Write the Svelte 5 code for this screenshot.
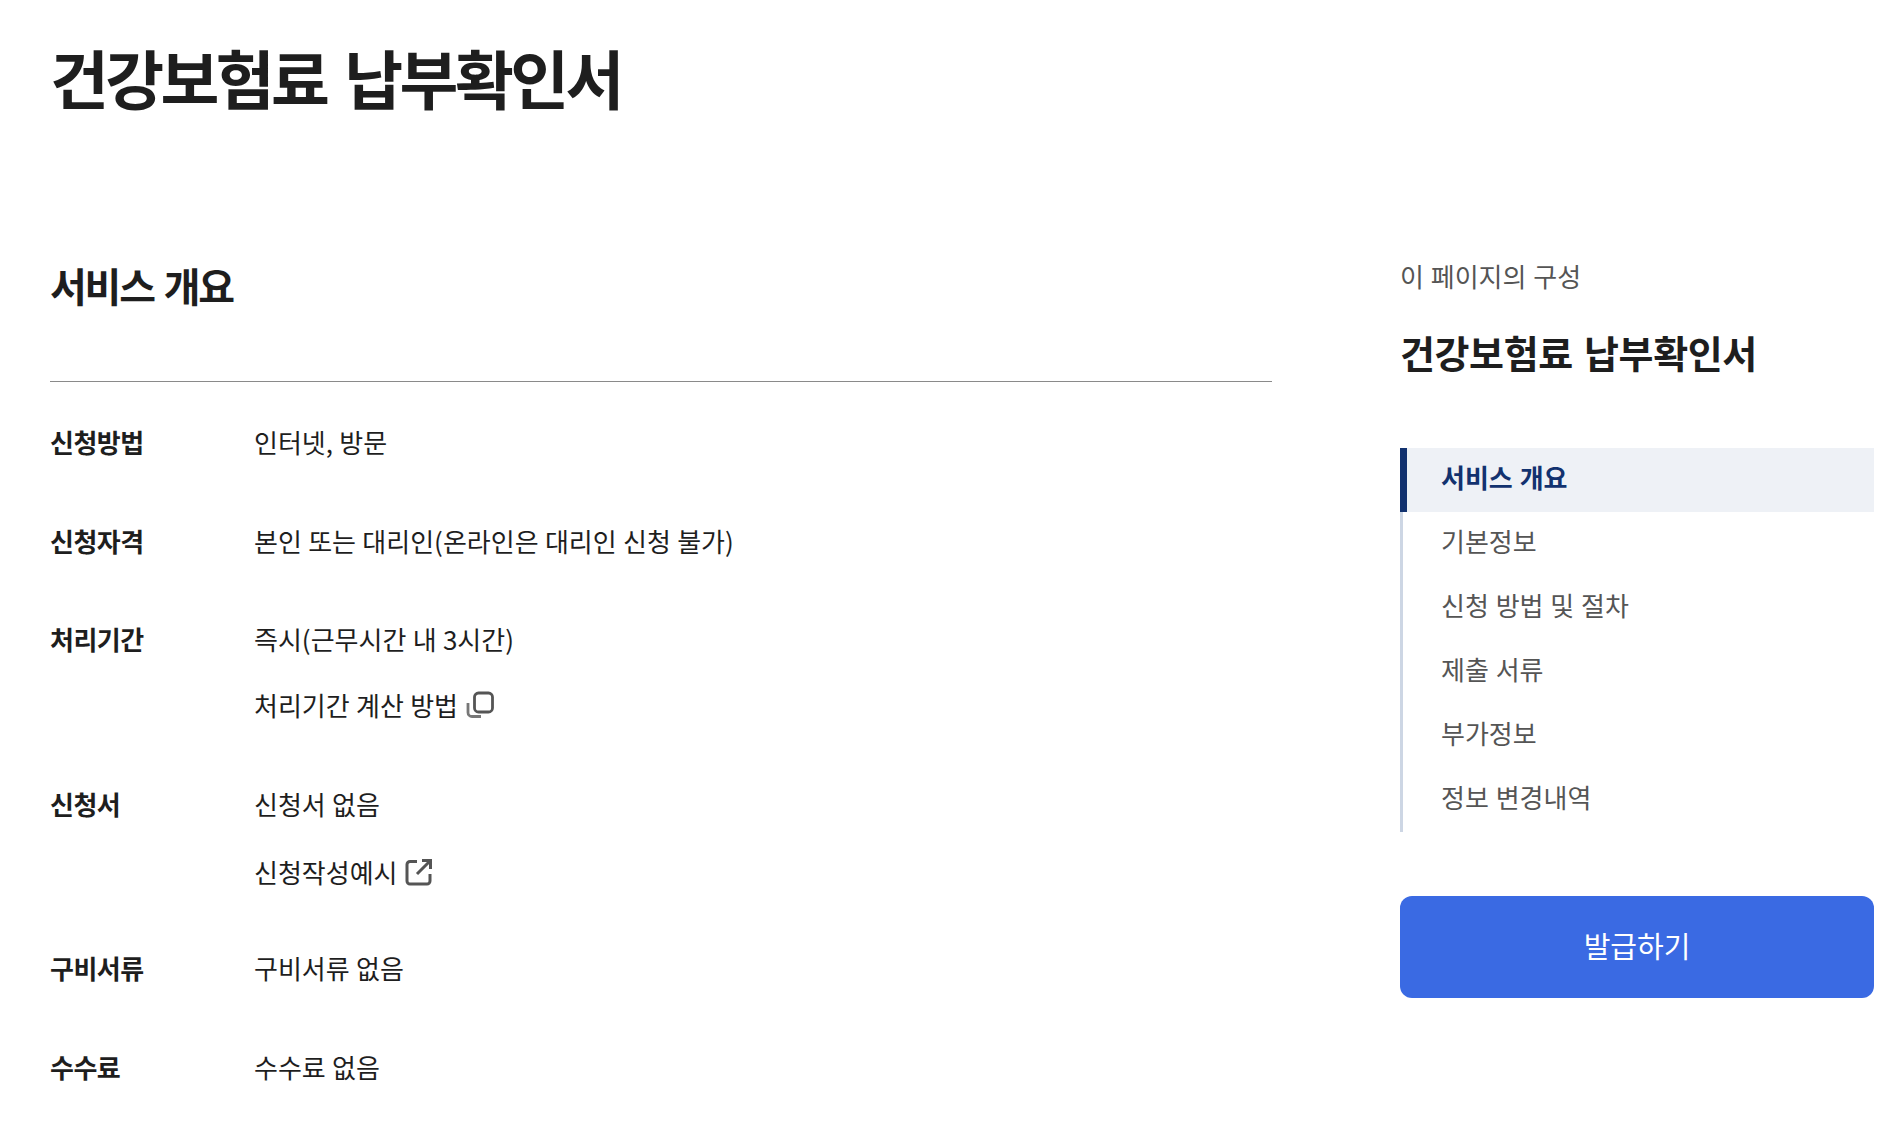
<script>
  const rows = [
    { label: "신청방법", lines: [{ text: "인터넷, 방문" }] },
    { label: "신청자격", lines: [{ text: "본인 또는 대리인(온라인은 대리인 신청 불가)" }] },
    { label: "처리기간", lines: [{ text: "즉시(근무시간 내 3시간)" }, { text: "처리기간 계산 방법", icon: "copy" }] },
    { label: "신청서", lines: [{ text: "신청서 없음" }, { text: "신청작성예시", icon: "link" }] },
    { label: "구비서류", lines: [{ text: "구비서류 없음" }] },
    { label: "수수료", lines: [{ text: "수수료 없음" }] },
  ];
  const nav = ["서비스 개요", "기본정보", "신청 방법 및 절차", "제출 서류", "부가정보", "정보 변경내역"];
</script>

<div class="page">
  <h1>건강보험료 납부확인서</h1>
  <div class="columns">
    <main>
      <h2>서비스 개요</h2>
      <dl>
        {#each rows as row}
          <div class="row">
            <dt>{row.label}</dt>
            <dd>
              {#each row.lines as line}
                <p class:link={line.icon === "link"}>
                  {line.text}
                  {#if line.icon === "copy"}
                    <svg width="28" height="28" viewBox="0 0 28 28" fill="none" stroke="#555" stroke-width="2.800">
                      <rect x="8.500" y="2" width="18" height="19" rx="4" />
                      <path d="M2 12v9.500a4 4 0 0 0 4 4h9" stroke="#777" />
                    </svg>
                  {:else if line.icon === "link"}
                    <svg width="28" height="28" viewBox="0 0 28 28" fill="none" stroke="#555" stroke-width="3">
                      <path d="M12 3.500H5a3 3 0 0 0-3 3V23a3 3 0 0 0 3 3h17a3 3 0 0 0 3-3v-7" />
                      <path d="M12 16 25.500 2.500M17 2.500h8.500V11" />
                    </svg>
                  {/if}
                </p>
              {/each}
            </dd>
          </div>
        {/each}
      </dl>
    </main>
    <aside>
      <div class="eyebrow">이 페이지의 구성</div>
      <div class="aside-title">건강보험료 납부확인서</div>
      <ul>
        {#each nav as item, i}
          <li class:active={i === 0}>{item}</li>
        {/each}
      </ul>
      <button type="button">발급하기</button>
    </aside>
  </div>
</div>

<style>
  :global(body) {
    background: #fff;
    font-family: "Noto Sans CJK KR", "Noto Sans", sans-serif;
    color: #1e1e1e;
  }
  .page {
    padding: 36px 24px 0 50px;
    height: 1092px;
    overflow: hidden;
  }
  h1 {
    margin: 0;
    font-size: 64px;
    line-height: 80px;
    font-weight: 700;
    letter-spacing: -3.6px;
    word-spacing: 7px;
  }
  .columns {
    display: flex;
    justify-content: space-between;
    margin-top: 139px;
  }
  main {
    width: 1222px;
  }
  h2 {
    margin: 0;
    font-size: 40px;
    line-height: 60px;
    font-weight: 700;
    letter-spacing: -2.2px;
    word-spacing: 3px;
    padding-bottom: 66px;
    border-bottom: 1px solid #8a8a8a;
  }
  dl {
    margin: 0;
    padding-top: 42px;
  }
  .row {
    display: flex;
    margin-bottom: 62.5px;
  }
  dt {
    width: 204px;
    flex: none;
    font-size: 26px;
    line-height: 36px;
    font-weight: 700;
    letter-spacing: -0.5px;
  }
  dd {
    margin: 0;
  }
  p {
    margin: 0 0 30px;
    font-size: 26px;
    line-height: 36px;
    word-spacing: 0.5px;
    display: flex;
    align-items: center;
    gap: 8px;
  }
  p:last-child {
    margin-bottom: 0;
  }
  p.link {
    padding-top: 2px;
    margin-bottom: -2px;
    gap: 7px;
  }
  aside {
    width: 474px;
    padding-top: 1px;
  }
  .eyebrow {
    font-size: 26px;
    line-height: 40px;
    word-spacing: 1px;
    color: #555;
  }
  .aside-title {
    margin-top: 26px;
    font-size: 38px;
    line-height: 60px;
    font-weight: 700;
    letter-spacing: -0.4px;
    word-spacing: 3px;
  }
  ul {
    list-style: none;
    margin: 66px 0 0;
    padding: 0;
    border-left: 3px solid #cdd6e4;
  }
  li {
    height: 64px;
    line-height: 58px;
    padding-left: 38px;
    font-size: 26px;
    word-spacing: 1px;
    color: #555;
  }
  li.active {
    margin-left: -3px;
    border-left: 7px solid #12326f;
    padding-left: 34px;
    background: #eef1f6;
    color: #12326f;
    font-weight: 700;
  }
  button {
    display: block;
    width: 100%;
    height: 102px;
    margin-top: 64px;
    padding: 0 0 4px;
    border: 0;
    border-radius: 12px;
    background: #3a6ae3;
    color: #fff;
    font-family: inherit;
    font-size: 29px;
  }
</style>
